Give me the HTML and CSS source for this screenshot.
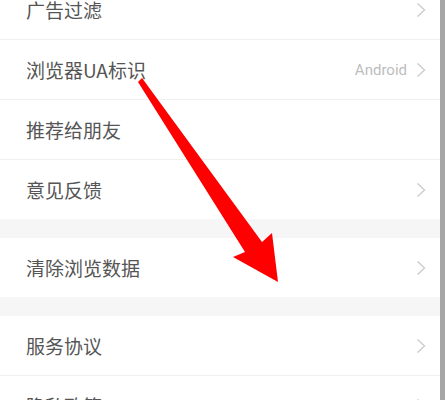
FILE: index.html
```html
<!DOCTYPE html>
<html lang="zh-CN">
<head>
    <meta charset="UTF-8">
    <meta name="viewport" content="width=device-width, initial-scale=1.0">
    <title>设置</title>
    <link rel="stylesheet" href="styles.css">
</head>
<body>

    <div class="screen">
        <!-- Settings list -->
        <div class="settings">
            <div class="group">
                <div class="row">
                    <span class="label">广告过滤</span>
                    <svg class="chevron" viewBox="0 0 10 16"><path d="M1.5 1.5 L8.5 8 L1.5 14.5"/></svg>
                </div>
                <div class="row">
                    <span class="label">浏览器UA标识</span>
                    <span class="value">Android</span>
                    <svg class="chevron" viewBox="0 0 10 16"><path d="M1.5 1.5 L8.5 8 L1.5 14.5"/></svg>
                </div>
                <div class="row">
                    <span class="label">推荐给朋友</span>
                </div>
                <div class="row">
                    <span class="label">意见反馈</span>
                    <svg class="chevron" viewBox="0 0 10 16"><path d="M1.5 1.5 L8.5 8 L1.5 14.5"/></svg>
                </div>
            </div>

            <div class="group">
                <div class="row">
                    <span class="label">清除浏览数据</span>
                    <svg class="chevron" viewBox="0 0 10 16"><path d="M1.5 1.5 L8.5 8 L1.5 14.5"/></svg>
                </div>
            </div>

            <div class="group">
                <div class="row">
                    <span class="label">服务协议</span>
                    <svg class="chevron" viewBox="0 0 10 16"><path d="M1.5 1.5 L8.5 8 L1.5 14.5"/></svg>
                </div>
                <div class="row">
                    <span class="label">隐私政策</span>
                    <svg class="chevron" viewBox="0 0 10 16"><path d="M1.5 1.5 L8.5 8 L1.5 14.5"/></svg>
                </div>
            </div>
        </div>

        <!-- Scrollbar strip -->
        <div class="scrollbar"></div>

        <!-- Red annotation arrow drawn over the list -->
        <svg class="arrow" viewBox="0 0 445 400" width="445" height="400">
            <polygon points="138,82 142,78 262,242 272,233 278,282 233,257 245,252"/>
        </svg>
    </div>

</body>
</html>
```

FILE: styles.css
```css
/* General Styles */
* {
    margin: 0;
    padding: 0;
    box-sizing: border-box;
}

body {
    background-color: #ffffff;
    font-family: "Noto Sans CJK SC", "Noto Sans", sans-serif;
    overflow: hidden;
}

.screen {
    position: relative;
    display: flex;
    width: 445px;
    height: 400px;
    overflow: hidden;
    background-color: #f6f6f6;
}

/* Settings list */
.settings {
    flex: 1;
    margin-top: -20px;
}

.group {
    background-color: #ffffff;
    margin-bottom: 19px;
}

.row {
    display: flex;
    align-items: center;
    height: 60px;
    padding: 0 14px 0 26px;
    border-bottom: 1px solid #efefef;
}

.group .row:last-child {
    border-bottom: none;
    height: 59px;
}

.label {
    flex: 1;
    font-size: 19px;
    color: #555555;
}

.value {
    font-family: "Roboto", "Noto Sans", sans-serif;
    font-size: 15px;
    color: #bdbdbd;
    margin-right: 9px;
}

.chevron {
    width: 10px;
    height: 16px;
    fill: none;
    stroke: #cccccc;
    stroke-width: 1.4;
}

.scrollbar {
    width: 5px;
    background-color: #a6a6a6;
}

/* Annotation arrow */
.arrow {
    position: absolute;
    top: 0;
    left: 0;
    pointer-events: none;
}

.arrow polygon {
    fill: #fe0000;
}
```
